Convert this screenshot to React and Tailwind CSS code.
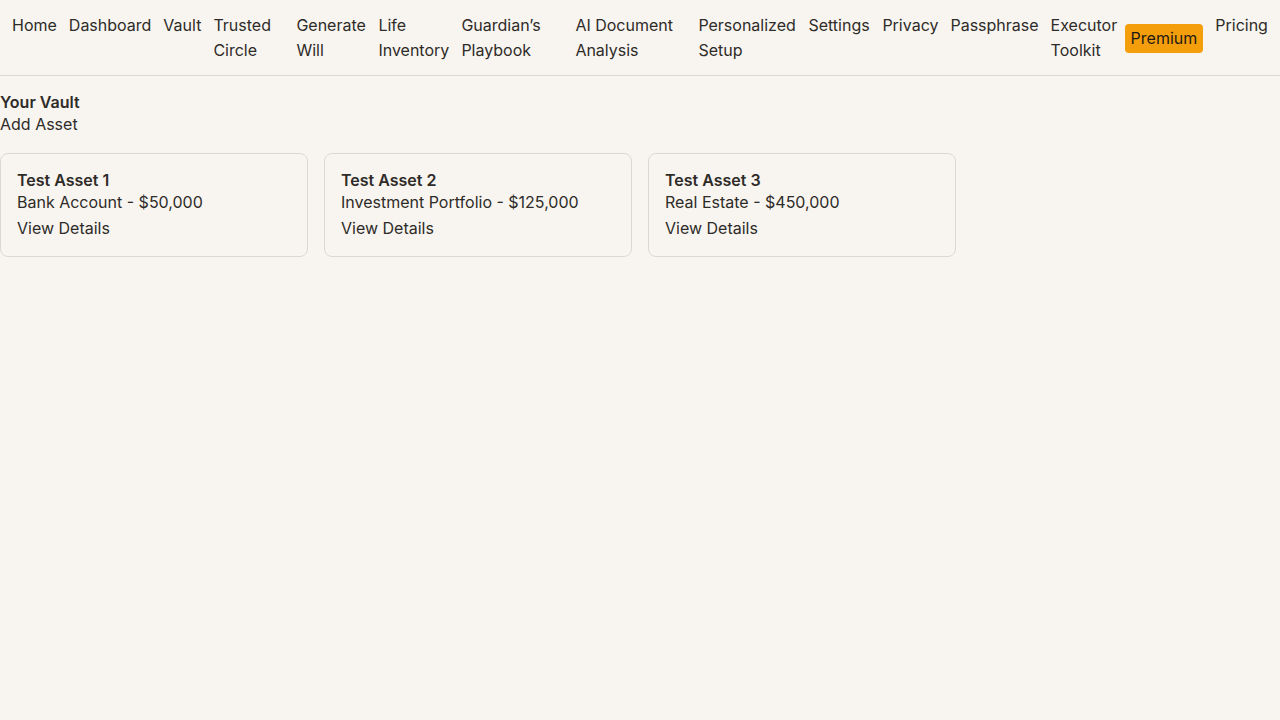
export default function App() {
  const links = [
    { t: "Home", w: "" },
    { t: "Dashboard", w: "" },
    { t: "Vault", w: "" },
    { t: "Trusted Circle", w: "w-[71px]" },
    { t: "Generate Will", w: "w-[70px]" },
    { t: "Life Inventory", w: "w-[71px]" },
    { t: "Guardian’s Playbook", w: "w-[102px]" },
    { t: "AI Document Analysis", w: "w-[111px]" },
    { t: "Personalized Setup", w: "w-[98px]" },
    { t: "Settings", w: "w-[62px]" },
    { t: "Privacy", w: "" },
    { t: "Passphrase", w: "" },
    { t: "Executor Toolkit", w: "w-[62px]" },
  ];
  const assets = [
    { name: "Test Asset 1", desc: "Bank Account - $50,000" },
    { name: "Test Asset 2", desc: "Investment Portfolio - $125,000" },
    { name: "Test Asset 3", desc: "Real Estate - $450,000" },
  ];
  return (
    <div
      className="min-h-screen bg-[#f8f5f0] text-[#2e2b28] text-base"
      style={{ fontFamily: "Inter, 'Noto Sans', sans-serif" }}
    >
      <nav className="flex gap-3 px-3 pt-[13px] pb-3 border-b border-[#ddd8d2] leading-[25px]">
        {links.map((l) => (
          <a key={l.t} className={`shrink-0 cursor-pointer ${l.w}`}>
            {l.t}
          </a>
        ))}
        <a className="shrink-0 self-center whitespace-nowrap bg-[#f59e0b] text-[#1f1a14] rounded-[4px] px-[6px] py-[2px] cursor-pointer">
          Premium
        </a>
        <a className="shrink-0 cursor-pointer">Pricing</a>
      </nav>
      <main className="pt-[15px] leading-[22px]">
        <div className="font-semibold">Your Vault</div>
        <div>Add Asset</div>
        <div className="flex gap-4 mt-[18px]">
          {assets.map((a) => (
            <div
              key={a.name}
              className="w-[308px] border border-[#ddd8d2] rounded-lg px-4 pt-[15px] pb-[17px]"
            >
              <div className="font-semibold">{a.name}</div>
              <div>{a.desc}</div>
              <div className="mt-[4px]">View Details</div>
            </div>
          ))}
        </div>
      </main>
    </div>
  );
}
